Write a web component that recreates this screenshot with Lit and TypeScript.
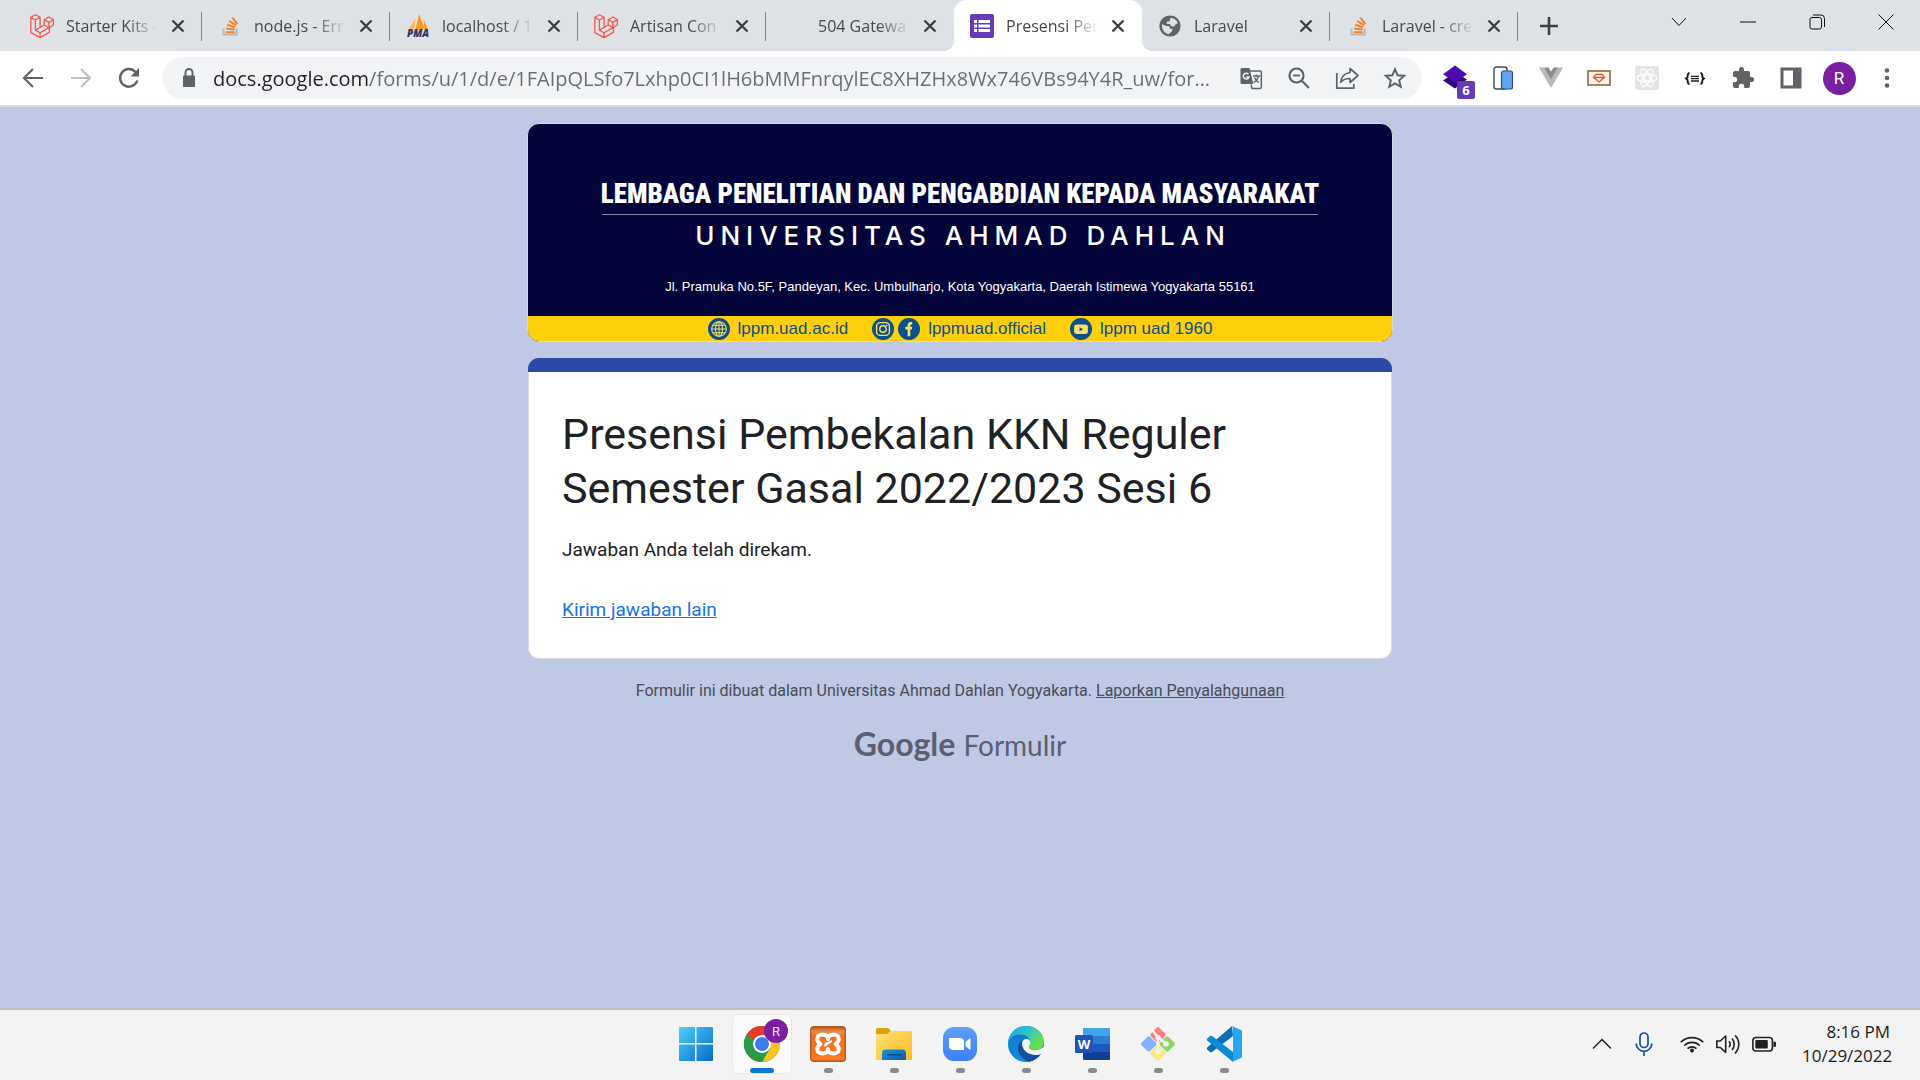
import { LitElement, html, css, svg, nothing } from "lit";
import { customElement } from "lit/decorators.js";
import { classMap } from "lit/directives/class-map.js";

interface Tab {
  title: string;
  icon: unknown;
  active?: boolean;
  divider?: boolean;
}

const laravelMark = svg`<svg viewBox="0 0 24 24" width="24" height="24" fill="none" stroke="#f4594f" stroke-width="1.3" stroke-linejoin="round">
  <path d="M.8 3.2 5.4.7l4.7 2.5L5.4 6z M.8 3.2v15.4l9.3 5 9.3-5.2V12.8 M5.4 6v10.2l4.7 2.6 9.3-5.4 M5.4 16.2 10.1 13.5V3.2 M10.1 18.8v4.8 M14.2 5.8l4.7-2.8 4.5 2.8-4.5 2.6z M14.2 5.8v5.2l4.9 2.8 4.3-2.8V5.8 M18.9 8.4v5 M14.2 11l-8.6 5.1"/></svg>`;
const stackMark = svg`<svg viewBox="0 0 24 24" width="24" height="24">
  <path d="M5.5 14.5v6h13v-6" fill="none" stroke="#b3b6ba" stroke-width="2"/>
  <path d="M8 18.200h8.500M8.200 14.600l8.200.9M9.200 10.700l7.900 2.500M11.200 7l7 4.400M14.400 3.700l5 6.500" stroke="#f48024" stroke-width="2"/></svg>`;
const pmaMark = svg`<svg viewBox="0 0 24 24" width="24" height="24">
  <path d="M9.500 4 2.500 15.500h6z" fill="#fbb667"/><path d="M13 0l6 15.500H9.500z" fill="#f79a1c"/><path d="M17.500 5 22 15.500h-3.500z" fill="#f79a1c"/>
  <text x="12" y="23" text-anchor="middle" font-family="Open Sans, sans-serif" font-size="10" font-weight="800" font-style="italic" fill="#34315e">PMA</text></svg>`;
const formsMark = svg`<svg viewBox="0 0 24 24" width="24" height="24"><rect width="24" height="24" rx="2" fill="#673ab7"/>
  <path d="M4 6h3v3H4zM8.500 6H20v3H8.500zM4 10.500h3v3H4zM8.500 10.500H20v3H8.500zM4 15h3v3H4zM8.500 15H20v3H8.500z" fill="#fff"/></svg>`;
const globeMark = svg`<svg viewBox="0 0 24 24" width="24" height="24"><circle cx="12" cy="12" r="10.600" fill="#5f6368"/>
  <path d="M12.500 3.800c3.500.2 6.300 2.400 7.300 5.200l-2.300 1.400-1.300 2-3-.2-1.300-2.200H8.800V7.700l2.700-.4zM4 10l3.400 1.700 3.800.6 1 2.400 2.500.4-1 2.700-3.200 2.400C6.600 19.500 3.600 15.700 4 10z" fill="#dee1e6"/></svg>`;

const closeGlyph = svg`<svg viewBox="0 0 14 14" width="14" height="14"><path d="M1.500 1.500l11 11M12.500 1.500l-11 11" stroke="#3c4043" stroke-width="2.400"/></svg>`;

const TABS: Tab[] = [
  { title: "Starter Kits -", icon: laravelMark, divider: true },
  { title: "node.js - Err", icon: stackMark, divider: true },
  { title: "localhost / 1", icon: pmaMark, divider: true },
  { title: "Artisan Con", icon: laravelMark, divider: true },
  { title: "504 Gatewa", icon: nothing },
  { title: "Presensi Per", icon: formsMark, active: true },
  { title: "Laravel", icon: globeMark, divider: true },
  { title: "Laravel - cre", icon: stackMark, divider: true },
];

const WINDOW_CONTROLS = [
  ["Search tabs", svg`<path d="M1 4l7 7.500L15 4"/>`],
  ["Minimize", svg`<path d="M0 8h16"/>`],
  ["Restore", svg`<rect x="1" y="3.500" width="11.500" height="11.500" rx="2"/><path d="M4 1h8a3.500 3.500 0 0 1 3.500 3.500V13"/>`],
  ["Close window", svg`<path d="M.5.5l15 15M15.500.5l-15 15"/>`],
] as const;

const NAVIGATION = [
  ["Back", svg`<path d="M22 12H3.500M12 3l-9 9 9 9" fill="none" stroke="#5f6368" stroke-width="2.200"/>`],
  ["Forward", svg`<path d="M2 12h18.500M12 3l9 9-9 9" fill="none" stroke="#bdc1c6" stroke-width="2.200"/>`],
  ["Reload", svg`<path d="M20.300 14.500A8.800 8.800 0 1 1 18.500 6" fill="none" stroke="#5f6368" stroke-width="2.400"/><path d="M22 2v8.500h-8.500z" fill="#5f6368"/>`],
] as const;

const PAGE_ACTIONS = [
  ["Translate this page", svg`<path d="M3 2h7.500l3.800 16H3a1.500 1.500 0 0 1-1.500-1.500v-13A1.500 1.500 0 0 1 3 2z" fill="#5f6368"/>
    <path d="M11 5h10a1.300 1.300 0 0 1 1.300 1.300v14.900a1.300 1.300 0 0 1-1.300 1.300h-8l-1-4" fill="none" stroke="#5f6368" stroke-width="1.500"/>
    <path d="M9.500 8.300A2.900 2.900 0 1 0 10 11H7.200" fill="none" stroke="#f1f3f4" stroke-width="1.500"/>
    <path d="M14 10h7M17.500 8.500V10M19.500 10c-.6 3-2.500 5-5 6.500M15.500 11.500c.8 2.200 2.300 3.800 4.500 5" fill="none" stroke="#5f6368" stroke-width="1.300"/>`],
  ["Zoom", svg`<g fill="none" stroke="#5f6368" stroke-width="2.200"><circle cx="9.500" cy="9.500" r="7"/><path d="M14.500 14.500l7.500 7.500"/></g><path d="M6 9.500h7" stroke="#5f6368" stroke-width="1.800"/>`],
  ["Share this page", svg`<g fill="none" stroke="#5f6368" stroke-width="1.700" stroke-linejoin="round"><path d="M1.800 7v15.200h17V18"/><path d="M15 2.500l8 7-8 7v-4c-4.300 0-7 1-9.300 3.800C6.300 11 9.500 7.300 15 6.500z"/></g>`],
  ["Bookmark this tab", svg`<path d="M12 3.200l2.600 6.100 6.600.6-5 4.400 1.500 6.500L12 17.400l-5.700 3.400 1.500-6.500-5-4.400 6.600-.6z" fill="none" stroke="#5f6368" stroke-width="2"/>`],
] as const;

const EXTENSIONS = [
  ["Layers", svg`<path d="M12 6.500l12 7-12 9-12-8z" fill="#2c0b78"/><path d="M12-.5l12 8.800-12 8.500L0 8.300z" fill="#4b0cad"/>`],
  ["Mobile simulator", svg`<rect x="3" y="1" width="13" height="22" rx="2.500" fill="#fff" stroke="#3c4b66" stroke-width="1.400"/><rect x="10.500" y="5" width="11" height="18" rx="2" fill="#61a3f7" stroke="#3c4b66" stroke-width="1.200"/>`],
  ["Vue devtools", svg`<path d="M0 1.500h5L12 13l7-11.500h5L12 22z" fill="#b9b9b9"/><path d="M5 1.500h4.500L12 5.700l2.500-4.200H19L12 13.500z" fill="#8c8c8c"/>`],
  ["Ruby wallet", svg`<rect x="1" y="5" width="22" height="14" fill="#fbf3ea" stroke="#8c6b36" stroke-width="1.600"/><path d="M8.700 8.500h6.600l2.200 2.800L12 16l-5.500-4.700z M6.500 11.300h11" fill="none" stroke="#e2572f" stroke-width="1.300"/>`],
  ["React devtools", svg`<rect width="24" height="24" rx="2" fill="#e3e3e3"/><g fill="none" stroke="#fff" stroke-width="1.200"><ellipse cx="12" cy="12" rx="10" ry="4"/><ellipse cx="12" cy="12" rx="10" ry="4" transform="rotate(60 12 12)"/><ellipse cx="12" cy="12" rx="10" ry="4" transform="rotate(120 12 12)"/><circle cx="12" cy="12" r="3"/></g>`],
  ["JSON viewer", svg`<g fill="none" stroke="#1c1c1c" stroke-width="1.900"><path d="M6.500 7C4 7 5 11 4.300 11.500L3 12.500l1.300 1C5 14 4 18 6.500 18M17.500 7C20 7 19 11 19.700 11.500L21 12.500l-1.300 1C19 14 20 18 17.500 18"/><path d="M8 10.300h8M8 12.700h8M8 15h8" stroke-width="1.300"/></g>`],
  ["Extensions", svg`<path d="M20.500 11H19V7a2 2 0 0 0-2-2h-4V3.500a2.500 2.500 0 0 0-5 0V5H4a2 2 0 0 0-2 2v3.800h1.500a2.700 2.700 0 0 1 0 5.400H2V20a2 2 0 0 0 2 2h3.800v-1.500a2.700 2.700 0 0 1 5.400 0V22H17a2 2 0 0 0 2-2v-4h1.500a2.500 2.500 0 0 0 0-5z" fill="#5f6368"/>`],
  ["Side panel", svg`<path d="M1.500 1.500h21v21h-21z" fill="#5f6368"/><path d="M4.500 4.500h9.500v15H4.500z" fill="#fff"/>`],
] as const;

const TASKS = [
  ["Start", "none", svg`<defs><linearGradient id="win" gradientUnits="userSpaceOnUse" x1="0" y1="0" x2="36" y2="36"><stop offset="0" stop-color="#4dd2fd"/><stop offset="1" stop-color="#0568c8"/></linearGradient></defs>
    <path d="M1 2a1 1 0 0 1 1-1h15v16H1zM18.500 1H34a1 1 0 0 1 1 1v15H18.500zM1 18.500h16V35H2a1 1 0 0 1-1-1zM18.500 18.500H35V34a1 1 0 0 1-1 1H18.500z" fill="url(#win)"/>`],
  ["Google Chrome", "active", svg`<circle cx="18" cy="18" r="18" fill="#2a9a48"/>
    <path d="M18 18 2.400 9A18 18 0 0 1 33.600 9z" fill="#e33b2e"/><path d="M18 9h15.600A18 18 0 0 1 18 36l7.800-13.500z" fill="#fcc31e"/><path d="M2.400 9A18 18 0 0 0 18 36l7.800-13.500L10.200 22.500z" fill="#2a9a48"/>
    <circle cx="18" cy="18" r="9" fill="#fff"/><circle cx="18" cy="18" r="7" fill="#3b7ded"/>
    <circle cx="32" cy="5" r="12" fill="#7b1fa2"/><text x="32" y="9.500" text-anchor="middle" font-family="Roboto, sans-serif" font-size="13" fill="#efe3f5">R</text>`],
  ["XAMPP", "open", svg`<defs><linearGradient id="xam" x1="0" y1="0" x2="0" y2="1"><stop offset="0" stop-color="#b8561a"/><stop offset=".15" stop-color="#f08a4b"/><stop offset=".3" stop-color="#f0711f"/><stop offset="1" stop-color="#fb7a24"/></linearGradient></defs>
    <rect x=".7" y=".7" width="34.600" height="34.600" rx="3" fill="url(#xam)" stroke="#b35c20" stroke-width="1.400"/>
    <path d="M18 13c-.5-4-3-4.500-5.500-4.500S7.200 10 7.200 13s1.300 3.500 3.300 5c-2 1.500-3.300 2.500-3.300 5s2.300 4.500 5.300 4.500 5-.5 5.500-4.500c.5 4 2.500 4.500 5.500 4.500s5.300-2 5.300-4.500-1.300-3.500-3.300-5c2-1.500 3.300-2 3.300-5s-2.800-4.500-5.300-4.500S18.500 9 18 13z" fill="none" stroke="#fff" stroke-width="4" stroke-linejoin="round"/><path d="M15 20.500c0-2 1-2.700 3-3.500s3-1 3-2.500" fill="none" stroke="#fff" stroke-width="2.600"/>`],
  ["File Explorer", "open", svg`<defs><linearGradient id="fold" x1="0" y1="0" x2="1" y2="1"><stop offset="0" stop-color="#ffe07a"/><stop offset="1" stop-color="#fbbc1b"/></linearGradient><linearGradient id="tray" x1="0" y1="0" x2="1" y2="1"><stop offset="0" stop-color="#1793dd"/><stop offset="1" stop-color="#0d5cab"/></linearGradient></defs>
    <path d="M0 3.500A1.500 1.500 0 0 1 1.500 2H11q1.500 0 2.500 1.200L15 5.200 12 9H0z" fill="#dda10c"/><path d="M0 8h10q1.500 0 2.500-1l1-1q1-1 2.500-1h19a1 1 0 0 1 1 1v28H0z" fill="url(#fold)"/>
    <path d="M6 34v-7a3.500 3.500 0 0 1 3.500-3.500h17A3.500 3.500 0 0 1 30 27v7z" fill="url(#tray)"/><path d="M11 28.800h14" stroke="#0b4a86" stroke-width="1.600" stroke-linecap="round"/>`],
  ["Zoom", "open", svg`<defs><linearGradient id="zm" x1="0" y1="0" x2="0" y2="1"><stop offset="0" stop-color="#5f9ffc"/><stop offset="1" stop-color="#3a80fa"/></linearGradient></defs>
    <rect x="1" y="1" width="34" height="34" rx="11" fill="url(#zm)"/><path d="M7.500 12H18a4 4 0 0 1 4 4v8H11a4 4 0 0 1-4-4v-7.500zM23.500 16l4-3.500q1-.8 1 .4v10.200q0 1.200-1 .4l-4-3.500z" fill="#fff"/>`],
  ["Microsoft Edge", "open", svg`<defs><linearGradient id="edA" x1="0" y1="0" x2="1" y2=".6"><stop offset="0" stop-color="#1ea0e6"/><stop offset=".5" stop-color="#2ec3ce"/><stop offset="1" stop-color="#6fe43c"/></linearGradient><linearGradient id="edB" x1="0" y1="0" x2="0" y2="1"><stop offset="0" stop-color="#1177c4"/><stop offset="1" stop-color="#0c8be6"/></linearGradient></defs>
    <circle cx="18" cy="18" r="18" fill="url(#edB)"/><path d="M0 18C0 8 8 0 18 0c11 0 18 8 18 15 0 6-4 9-9 9-4 0-6-1-6-3 0-1.500 1.500-2 1.500-4.500C22.500 12 18 8.500 12 8.500 5.500 8.500 1 12 0 18z" fill="url(#edA)"/>
    <path d="M14 14.500c-5 3-5.500 10-1 15.500 3 3.800 7 6 9 5.500 5-1.300 9-4.500 11.500-8.500-3 1.200-6 1.500-8.500 1.200-7-.8-11.500-6-11-13.700z" fill="#124f9d"/>
    <path d="M14 17c.5-3 3-4.500 5-4 2.500.6 3.500 2 3.500 3.800 0 2.200-1.500 2.700-1.500 4.200 0 2 2.500 3.200 6 3.200 3 0 6-1 9-3.700l.5 3.500-3 4c-2.500 1-5 1.300-8 .8-6.500-1-11.500-5-11.500-11.800z" fill="#f3f3f3"/><path d="M36 15c0 6-4 9-9 9-4 0-6-1-6-3l4-9z" fill="#5edb54" opacity=".55"/>`],
  ["Word", "open", svg`<path d="M10 2h25a1 1 0 0 1 1 1v7H9V3a1 1 0 0 1 1-1z" fill="#41a5ee"/><path d="M9 10h27v8H9z" fill="#2b7cd3"/><path d="M9 18h27v8H9z" fill="#185abd"/><path d="M9 26h27v7a1 1 0 0 1-1 1H10a1 1 0 0 1-1-1z" fill="#103f91"/>
    <rect x="1" y="9" width="18" height="18" rx="1.500" fill="#1c55b3"/><text x="10" y="23" text-anchor="middle" font-family="Open Sans, sans-serif" font-size="13" font-weight="700" fill="#fff">W</text>`],
  ["Git Bash", "open", svg`<g transform="rotate(45 18 18)"><rect x="5.500" y="5.500" width="12" height="12" rx="2" fill="#ff8080"/><rect x="18.500" y="5.500" width="12" height="12" rx="2" fill="#8fd464"/><rect x="5.500" y="18.500" width="12" height="12" rx="2" fill="#80b3ff"/><rect x="18.500" y="18.500" width="12" height="12" rx="2" fill="#ffe680"/></g>
    <g stroke="#f3f3f3" stroke-width="2.400" fill="none"><path d="M12 4l6 7.500v14M18 11l8 7"/></g><g fill="#f3f3f3"><circle cx="18" cy="25.500" r="2.800"/><circle cx="26" cy="18" r="2.800"/><circle cx="18" cy="11.500" r="2.600"/></g>`],
  ["Visual Studio Code", "open", svg`<path d="M1.200 21.500 26 0l1 10L6 25.900q-1 .7-2 .1l-2.800-2.500q-1-1 0-2z" fill="#0a6fb5"/>
    <path d="M1.200 12.500 4 10q1-.6 2 .1L27 26v10L1.200 14.500q-1-1 0-2z" fill="#0a8ad8"/><path d="M26 0l9 4q1 .5 1 1.500v25q0 1-1 1.500l-9 4q1-1 1-2.500v-31Q27 1 26 0z" fill="#26a5f2"/>`],
] as const;

const TRAY = [
  ["Show hidden icons", "narrow", svg`<path d="M3 16.500l9-9 9 9" fill="none" stroke="#222" stroke-width="1.500"/>`],
  ["Microphone in use", "wide", svg`<g fill="none" stroke="#1651a8" stroke-width="1.700"><rect x="8" y="1" width="8" height="14.500" rx="4"/><path d="M4.200 11.500a7.800 7.800 0 0 0 15.600 0M12 19.500V24"/></g>`],
  ["Wi-Fi", "narrow", svg`<g fill="none" stroke="#222" stroke-width="1.700"><path d="M.8 10.200a15.800 15.800 0 0 1 22.400 0M4.300 13.500a11 11 0 0 1 15.400 0M7.500 16.600a6.500 6.500 0 0 1 9 0"/></g><circle cx="12" cy="18.600" r="2" fill="#222"/>`],
  ["Volume", "narrow", svg`<g fill="none" stroke="#222" stroke-width="1.600" stroke-linejoin="round"><path d="M.8 9v6.500h3.500l5.400 4.800V4L4.300 9z"/><path d="M13 9.300a5 5 0 0 1 0 6M16 6.500a8.600 8.600 0 0 1 0 11.500M19 3.300c5 4.800 5 13.200 0 18"/></g>`],
  ["Battery", "narrow", svg`<rect x=".9" y="5.500" width="19.500" height="13.500" rx="3" fill="none" stroke="#222" stroke-width="1.600"/><rect x="3.300" y="8" width="12.500" height="8.500" rx="1" fill="#222"/><path d="M21.500 9.500h1a1.500 1.500 0 0 1 1.500 1.500v2.500a1.500 1.500 0 0 1-1.500 1.500h-1z" fill="#222"/>`],
] as const;

const icon = (body: unknown, size = 24, box = 24) =>
  html`<svg width=${size} height=${size} viewBox="0 0 ${box} ${box}" aria-hidden="true">${body}</svg>`;

@customElement("browser-tabs")
class BrowserTabs extends LitElement {
  static styles = css`
    :host { display: flex; height: 51px; background: #dee1e6; font-family: "Segoe UI", "Open Sans", "Noto Sans", sans-serif; }
    button { border: 0; padding: 0; background: none; display: grid; place-items: center; }
    svg { display: block; overflow: visible; }
    .tabs { display: flex; flex: 0 1 1504px; margin-left: 14px; min-width: 0; }
    .tab { position: relative; display: flex; flex: 1 1 0; min-width: 0; align-items: center; padding: 0 16px; gap: 12px; }
    .favicon { flex: none; width: 24px; height: 24px; }
    .title { flex: 1; min-width: 0; overflow: hidden; white-space: nowrap; border: 0; background: none; padding: 0; margin: 0;
      display: block; text-align: left; font: inherit; font-size: 16px; line-height: 24px; color: #45494d;
      -webkit-mask-image: linear-gradient(to left, transparent, #000 32px); mask-image: linear-gradient(to left, transparent, #000 32px); }
    .close { flex: none; width: 16px; height: 24px; }
    .divider::after { content: ""; position: absolute; right: 0; top: 12px; bottom: 10px; width: 1px; background: #808388; }
    .active { background: #fff; border-radius: 12px 12px 0 0; }
    .active::before, .active::after { content: ""; position: absolute; bottom: 0; width: 10px; height: 10px; }
    .active::before { right: 100%; background: radial-gradient(circle at 0 0, transparent 10px, #fff 10px); }
    .active::after { left: 100%; background: radial-gradient(circle at 100% 0, transparent 10px, #fff 10px); }
    .add { width: 62px; }
    .controls { display: flex; margin-left: auto; height: 43px; }
    .control { width: 69px; fill: none; stroke: #111; stroke-width: 1px; }
  `;

  render() {
    return html`
      <div class="tabs">
        ${TABS.map((tab) => html`
          <div class=${classMap({ tab: true, active: !!tab.active, divider: !!tab.divider })}>
            <span class="favicon">${tab.icon}</span>
            <button class="title">${tab.title}</button>
            <button class="close" aria-label="Close tab">${closeGlyph}</button>
          </div>`)}
      </div>
      <button class="add" aria-label="New tab">${icon(svg`<path d="M9 0v18M0 9h18" stroke="#3c4043" stroke-width="2.600"/>`, 18, 18)}</button>
      <div class="controls">
        ${WINDOW_CONTROLS.map(([label, body]) => html`<button class="control" aria-label=${label}>${icon(body, 16, 16)}</button>`)}
      </div>`;
  }
}

@customElement("browser-toolbar")
class BrowserToolbar extends LitElement {
  static styles = css`
    :host { display: flex; align-items: center; height: 54px; padding: 0 9px; background: #fff; border-bottom: 2px solid #d5d7da; }
    button { flex: none; position: relative; border: 0; padding: 0; background: none; width: 48px; height: 42px; display: grid; place-items: center; }
    svg { display: block; overflow: visible; }
    .address { flex: 1; min-width: 0; display: flex; align-items: center; height: 42px; margin: 0 9px; padding-right: 3px; border-radius: 21px; background: #f1f3f4; }
    .lock { flex: none; width: 24px; margin: 0 12px 0 15px; }
    .url { flex: 1; min-width: 0; border: 0; outline: 0; padding: 0; height: 42px; text-overflow: ellipsis;
      font: 20px "Segoe UI", "Open Sans", "Noto Sans", sans-serif;
      background: linear-gradient(to right, #202124 157px, #696c70 157px); -webkit-background-clip: text; background-clip: text;
      -webkit-text-fill-color: transparent; color: #696c70; }
    .actions { display: flex; margin-left: 12px; }
    .badge { position: absolute; right: 4px; bottom: 0; width: 18px; height: 18px; border-radius: 2px; background: #673ab7; color: #fff;
      font: 700 13px/18px "Open Sans", sans-serif; text-align: center; }
    .avatar { width: 33px; height: 33px; border-radius: 50%; background: #7b1fa2; color: #fff; font: 17px/33px Roboto, sans-serif; text-align: center; }
  `;

  render() {
    return html`
      ${NAVIGATION.map(([label, body]) => html`<button aria-label=${label}>${icon(body)}</button>`)}
      <div class="address">
        <span class="lock">${icon(svg`<path d="M6.500 10h11v10.500h-11z" fill="#5f6368" stroke="#5f6368" stroke-linejoin="round"/><path d="M8.500 10V6.500a3.500 3.500 0 0 1 7 0V10" fill="none" stroke="#5f6368" stroke-width="1.900"/>`)}</span>
        <input class="url" aria-label="Address" value="docs.google.com/forms/u/1/d/e/1FAIpQLSfo7Lxhp0CI1lH6bMMFnrqylEC8XHZHx8Wx746VBs94Y4R_uw/formResponse">
        <div class="actions">
          ${PAGE_ACTIONS.map(([label, body]) => html`<button aria-label=${label}>${icon(body)}</button>`)}
        </div>
      </div>
      ${EXTENSIONS.map(([label, body], i) => html`<button aria-label=${label}>${icon(body)}${i === 0 ? html`<span class="badge">6</span>` : nothing}</button>`)}
      <button aria-label="Profile"><span class="avatar">R</span></button>
      <button aria-label="Menu">${icon(svg`<g fill="#5f6368"><circle cx="12" cy="4.500" r="2.300"/><circle cx="12" cy="12" r="2.300"/><circle cx="12" cy="19.500" r="2.300"/></g>`)}</button>`;
  }
}

@customElement("form-page")
class FormPage extends LitElement {
  static styles = css`
    :host { display: block; background: #bfc8e4; font-family: Roboto, sans-serif; color: #202124; padding: 16px 24px; }
    svg { display: block; overflow: visible; }
    .column { max-width: 864px; margin: 0 auto; }
    .banner { border: 1px solid #dadce0; border-radius: 12px; overflow: hidden; background: #03043a; color: #fff; text-align: center; margin: 0 -1px 16px; white-space: nowrap; }
    .institute { margin: 54px 0 0; font: 900 27px/32px "Roboto Condensed", "Liberation Sans Narrow", "Open Sans Condensed", "DejaVu Sans Condensed", sans-serif; }
    .rule { margin: 4px 74px 0; height: 1px; border: 0; background: #85859f; }
    .university { margin: 4px 0 0; padding-left: 6px; font: 500 26px/34px Inter, sans-serif; letter-spacing: 6px; }
    .street { margin: 24px 0 19px; font: 13px/20px "Liberation Sans", sans-serif; }
    .links { display: flex; justify-content: center; align-items: center; height: 25px; background: #ffcf0c; font: 17px/24px "Liberation Sans", sans-serif; color: #0b4f8c; gap: 24px; }
    .link, .badges { display: flex; align-items: center; }
    .link { gap: 8px; }
    .badges { gap: 4px; }
    .stripe { height: 14px; border-radius: 11px 11px 0 0; background: #294ba7; }
    .body { padding: 35px 33px 34px; border: 1px solid #dadce0; border-top: 0; border-radius: 0 0 11px 11px; background: #fff; }
    .heading { margin: 0; font-size: 43px; font-weight: 400; line-height: 54px; max-width: 760px; }
    .note { margin: 21px 0 32px; font-size: 19px; line-height: 28px; }
    .again { display: inline-block; font-size: 19px; line-height: 28px; color: #1a73e8; }
    .legal { margin: 20px 0 0; font-size: 16px; line-height: 24px; text-align: center; color: #474c59; }
    .legal a { color: inherit; }
    .brand { display: flex; justify-content: center; align-items: baseline; gap: 8px; margin-top: 19px; line-height: 44px; color: #5a6070; font-family: Lato, sans-serif; }
    .maker { font-size: 32px; font-weight: 700; }
    .product { font-size: 28px; }
  `;

  render() {
    return html`
      <div class="column">
        <header class="banner">
          <p class="institute">LEMBAGA PENELITIAN DAN PENGABDIAN KEPADA MASYARAKAT</p>
          <hr class="rule">
          <p class="university">UNIVERSITAS AHMAD DAHLAN</p>
          <p class="street">Jl. Pramuka No.5F, Pandeyan, Kec. Umbulharjo, Kota Yogyakarta, Daerah Istimewa Yogyakarta 55161</p>
          <div class="links">
            <span class="link">${icon(svg`<circle cx="12" cy="12" r="12" fill="#0b4f8c"/><g fill="none" stroke="#ffdf60" stroke-width="1.100"><circle cx="12" cy="12" r="8"/><ellipse cx="12" cy="12" rx="3.800" ry="8"/><path d="M4 12h16M12 4v16M5.300 7.800h13.400M5.300 16.200h13.400"/></g>`, 22)}lppm.uad.ac.id</span>
            <span class="link"><span class="badges">${icon(svg`<circle cx="12" cy="12" r="12" fill="#0b4f8c"/><g fill="none" stroke="#ffdf60" stroke-width="1.500"><rect x="5" y="5" width="14" height="14" rx="4"/><circle cx="12" cy="12" r="3.500"/></g><circle cx="16" cy="8" r="1" fill="#ffdf60"/>`, 22)}
              ${icon(svg`<circle cx="12" cy="12" r="12" fill="#0b4f8c"/><path d="M10.500 20v-7.500H8V9.500h2.500V8c0-2.800 1.500-4 5-3.700v2.900c-1.600-.1-2.100.2-2.100 1.300v1h2.100l-.3 3h-1.800V20z" fill="#ffdf60"/>`, 22)}</span>lppmuad.official</span>
            <span class="link">${icon(svg`<circle cx="12" cy="12" r="12" fill="#0b4f8c"/><rect x="4.500" y="7" width="15" height="10.500" rx="3" fill="#ffdf60"/><path d="M10.500 10v4.500l3.700-2.200z" fill="#0b4f8c"/>`, 22)}lppm uad 1960</span>
          </div>
        </header>
        <main>
          <div class="stripe"></div>
          <div class="body">
            <h1 class="heading">Presensi Pembekalan KKN Reguler Semester Gasal 2022/2023 Sesi 6</h1>
            <p class="note">Jawaban Anda telah direkam.</p>
            <a class="again" href="#">Kirim jawaban lain</a>
          </div>
        </main>
        <p class="legal">Formulir ini dibuat dalam Universitas Ahmad Dahlan Yogyakarta. <a href="#">Laporkan Penyalahgunaan</a></p>
        <div class="brand"><span class="maker">Google</span><span class="product">Formulir</span></div>
      </div>`;
  }
}

@customElement("task-bar")
class TaskBar extends LitElement {
  static styles = css`
    :host { display: grid; grid-template-columns: 1fr auto 1fr; height: 70px; border-top: 2px solid #c0c0c2; background: #f3f3f3; font-family: "Segoe UI", "Open Sans", "Noto Sans", sans-serif; color: #1c1c1c; }
    button { border: 0; padding: 0; background: none; display: grid; place-items: center; font: inherit; color: inherit; }
    svg { display: block; overflow: visible; }
    .tasks { grid-column: 2; display: flex; align-items: center; gap: 6px; }
    .task { position: relative; width: 60px; height: 60px; border-radius: 6px; margin-bottom: 2px; }
    .open::after, .active::after { content: ""; position: absolute; bottom: 1px; width: 9px; height: 5px; border-radius: 3px; background: #8a8a8a; }
    .active { background: #fafafa; box-shadow: inset 0 0 0 1px #e8e8e8; }
    .active::after { width: 24px; background: #0a7ad6; }
    .tray { display: flex; justify-content: flex-end; align-items: center; padding-right: 28px; margin-bottom: 2px; }
    .narrow { width: 36px; height: 48px; }
    .wide { width: 48px; height: 48px; margin-right: 6px; }
    .clock { margin-left: 18px; padding: 0 2px; font-size: 17px; line-height: 24px; text-align: right; display: block; white-space: nowrap; width: 92px; }
  `;

  render() {
    return html`
      <div class="tasks">
        ${TASKS.map(([label, state, body]) => html`<button class="task ${state}" aria-label=${label}>${icon(body, 36, 36)}</button>`)}
      </div>
      <div class="tray">
        ${TRAY.map(([label, size, body]) => html`<button class=${size} aria-label=${label}>${icon(body)}</button>`)}
        <button class="clock">8:16 PM<br>10/29/2022</button>
      </div>`;
  }
}

@customElement("app-root")
class AppRoot extends LitElement {
  static styles = css`
    :host { display: flex; flex-direction: column; min-height: 100vh; }
    .page { flex: 1; }
  `;

  render() {
    return html`
      <browser-tabs></browser-tabs>
      <browser-toolbar></browser-toolbar>
      <form-page class="page"></form-page>
      <task-bar></task-bar>`;
  }
}
